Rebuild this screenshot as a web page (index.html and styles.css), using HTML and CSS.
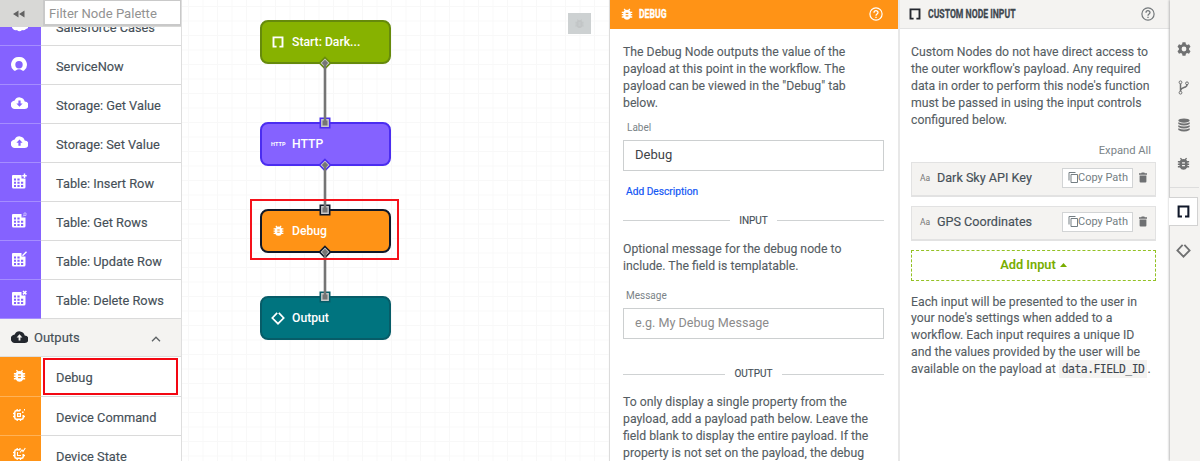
FILE: index.html
```html
<!DOCTYPE html>
<html lang="en">
<head>
<meta charset="utf-8">
<title>Workflow Editor</title>
<link rel="stylesheet" href="styles.css">
</head>
<body>
<svg class="defs" width="0" height="0" aria-hidden="true">
  <symbol id="bug" viewBox="0 0 24 24"><path fill="currentColor" d="M21 8h-3.2a6 6 0 0 0-1.8-2L17.800 4.200 16.200 2.600 13.800 5a7 7 0 0 0-3.600 0L7.800 2.600 6.200 4.200 8 6a6 6 0 0 0-1.800 2H3v2.300h2.600V12H3v2.300h2.600V16H3v2.300h3.200a6.500 6.500 0 0 0 11.600 0H21V16h-2.600v-1.700H21V12h-2.600v-1.700H21zM14.300 16.200H9.700v-2h4.600zm0-4.200H9.700v-2h4.600z"/></symbol>
  <symbol id="bracket" viewBox="0 0 12 12"><path fill="none" stroke="currentColor" stroke-width="1.9" d="M4.600 10.600H1.500V1.400H10.500V10.600H7.400"/></symbol>
  <symbol id="diamond" viewBox="0 0 14 14"><path fill="none" stroke="currentColor" stroke-width="1.700" d="M6.200 1.800 1.300 7 7 12.700 12.700 7 7.800 1.800"/></symbol>
  <symbol id="help" viewBox="0 0 14 14"><circle cx="7" cy="7" r="6.100" fill="none" stroke="currentColor" stroke-width="1.200"/><path fill="none" stroke="currentColor" stroke-width="1.300" d="M5 5.700C5 3 9 3 9 5.600 9 7 7 7 7 8.700M7 9.700V11"/></symbol>
  <symbol id="table" viewBox="0 0 16 16"><path fill="currentColor" fill-rule="evenodd" d="M2 2h8.500v3.500H14.500V14a1.500 1.500 0 0 1-1.500 1.500H2.500A1.500 1.500 0 0 1 1 14V3a1 1 0 0 1 1-1zM3 5.500v2h2v-2zm3.400 0v2h2.200v-2zM3 8.700v2h2v-2zm3.400 0v2h2.200v-2zm3.600 0v2h2.200v-2zM3 11.900v2h2v-2zm3.400 0v2h2.200v-2zm3.600 0v2h2.200v-2z"/></symbol>
  <symbol id="cloud" viewBox="0 0 17 12"><path fill="currentColor" d="M13.700 4.500A5.300 5.300 0 0 0 3.700 3.500 4.200 4.200 0 0 0 4.200 12h9.300a3.700 3.700 0 0 0 .2-7.500z"/></symbol>
  <symbol id="chip" viewBox="0 0 14 14"><path fill="none" stroke="currentColor" stroke-width="1.500" d="M8 2.800H4.300q-1.500 0-1.500 1.500v5.400q0 1.500 1.500 1.500h5.400q1.500 0 1.500-1.500V7"/><path stroke="currentColor" stroke-width="1.300" d="M5.200 1v2M8 1v2M5.200 11v2M8.500 11v2M1 5.500h2M1 8.500h2M11 8.500h2"/></symbol>
  <symbol id="copy" viewBox="0 0 10 11"><path fill="none" stroke="currentColor" d="M3 2.500h6.500v8H3zM1 8.500V.5h6.500"/></symbol>
  <symbol id="trash" viewBox="0 0 8 11"><path fill="currentColor" d="M2.700.5h2.600l.5.800H8v1.500H0V1.300h2.200zM.6 3.500h6.800V9.500q0 1-1 1H1.600q-1 0-1-1z"/></symbol>
</svg>
<div class="app">
  <aside class="palette">
    <div class="palette-head">
      <div class="collapse"><svg width="12" height="8" viewBox="0 0 12 8"><path fill="#626262" d="M5.500.5v7L0 4zM11.500.5v7L6 4z"/></svg></div>
      <div class="filter">Filter Node Palette</div>
    </div>
    <div class="palette-list">
      <div class="item"><div class="tile purple"><svg width="17" height="13" viewBox="0 0 17 13"><path fill="#fff" d="M1 6a4 4 0 0 1 6-4 4 4 0 0 1 7 2 3 3 0 0 1 1 6 4 4 0 0 1-4 1 3 3 0 0 1-5 0 4 4 0 0 1-5-5z"/></svg></div><span>Salesforce Cases</span></div>
      <div class="item"><div class="tile purple"><svg width="16" height="14" viewBox="0 0 16 14"><path fill="#fff" fill-rule="evenodd" d="M8 0a7.600 7.600 0 0 0-5.300 13.300q1 .9 2 .2a5.500 5.500 0 0 1 6.600 0q1 .7 2-.2A7.600 7.600 0 0 0 8 0zm0 4a3.700 3.700 0 1 1 0 7.400A3.700 3.700 0 0 1 8 4z"/></svg></div><span>ServiceNow</span></div>
      <div class="item"><div class="tile purple"><svg width="17" height="12" viewBox="0 0 17 12"><use href="#cloud"/><path fill="#8562ff" d="M7.400 3.500h2.200v3h2L8.500 9.800 5.400 6.500h2z"/></svg></div><span>Storage: Get Value</span></div>
      <div class="item"><div class="tile purple"><svg width="17" height="12" viewBox="0 0 17 12"><use href="#cloud"/><path fill="#8562ff" d="M7.400 9.800h2.200v-3h2L8.500 3.500 5.400 6.800h2z"/></svg></div><span>Storage: Set Value</span></div>
      <div class="item"><div class="tile purple"><svg width="16" height="16" viewBox="0 0 16 16"><use href="#table"/><path stroke="#fff" stroke-width="1.500" d="M13.500.5v4.400M11.300 2.700h4.400"/></svg></div><span>Table: Insert Row</span></div>
      <div class="item"><div class="tile purple"><svg width="16" height="16" viewBox="0 0 16 16"><use href="#table"/><path fill="none" stroke="#c5b6ff" d="M12 4.500l1-1.500V1h2v2.500h-2"/></svg></div><span>Table: Get Rows</span></div>
      <div class="item"><div class="tile purple"><svg width="16" height="16" viewBox="0 0 16 16"><use href="#table"/><path stroke="#fff" stroke-width="1.400" d="M11.500 4.800l4-4"/></svg></div><span>Table: Update Row</span></div>
      <div class="item"><div class="tile purple"><svg width="16" height="16" viewBox="0 0 16 16"><use href="#table"/><path stroke="#fff" stroke-width="1.500" d="M12 1l3.400 3.400M15.400 1L12 4.400"/></svg></div><span>Table: Delete Rows</span></div>
      <div class="group"><svg width="17" height="12" viewBox="0 0 17 12"><use href="#cloud"/><path fill="#f4f3f1" d="M7.600 9.500h1.800V6.600h2L8.500 3.200 5.600 6.600h2z"/></svg><span>Outputs</span><svg class="chev" width="10" height="6" viewBox="0 0 10 6"><path fill="none" stroke="#5d6265" stroke-width="1.300" d="M1 5.200l4-4 4 4"/></svg></div>
      <div class="item first"><div class="tile orange"><svg width="15" height="15"><use href="#bug"/></svg></div><span>Debug</span><div class="item-mark"></div></div>
      <div class="item"><div class="tile orange"><svg width="14" height="14" viewBox="0 0 14 14"><use href="#chip"/><path fill="none" stroke="#fff" stroke-width="1.200" d="M5.600 5.600h2.800v2.800H5.600z"/><path fill="#fff" d="M10 3.500h1.500v1.500H10zM12 1h1v1.500h-1z"/></svg></div><span>Device Command</span></div>
      <div class="item"><div class="tile orange"><svg width="14" height="14" viewBox="0 0 14 14"><use href="#chip"/><path fill="none" stroke="#fff" stroke-width="1.100" d="M5.500 5v3.500H9M8 5.500l2-2.500 1 1.500L13.300 1"/></svg></div><span>Device State</span></div>
    </div>
  </aside>

  <main class="canvas">
    <div class="node start"><svg width="12" height="12"><use href="#bracket"/></svg><span>Start: Dark...</span></div>
    <div class="node http"><small>HTTP</small><span>HTTP</span></div>
    <div class="node debug"><svg width="13" height="13"><use href="#bug"/></svg><span>Debug</span></div>
    <div class="node output"><svg width="14" height="14"><use href="#diamond"/></svg><span>Output</span></div>
    <svg class="wires" width="20" height="250" viewBox="0 0 20 250">
      <g stroke-width="1.600" fill="#c9c9c9">
        <path stroke="#668a0c" d="M10 7.500l5.500 5.500-5.500 5.500-5.500-5.500z"/>
        <path stroke="#4b2df0" d="M5.300 68.300h9.400v9.400H5.300zM10 109.500l5.500 5.500-5.500 5.500-5.500-5.500z"/>
        <path stroke="#101828" d="M5.300 155.300h9.400v9.400H5.300zM10 196.500l5.500 5.500-5.500 5.500-5.500-5.500z"/>
        <path stroke="#075c68" d="M5.300 242.300h9.400v9.400H5.300z"/>
      </g>
      <g fill="#757575"><path d="M10 9.800l3.200 3.200-3.200 3.200L6.800 13zM7.500 70.500h5v5h-5zM10 111.800l3.200 3.200-3.200 3.200-3.200-3.200zM7.500 157.500h5v5h-5zM10 198.800l3.200 3.200-3.200 3.200-3.200-3.200zM7.500 244.500h5v5h-5z"/></g>
      <path stroke="#757575" stroke-width="2.600" d="M10 13v60M10 115v45M10 202v45"/>
    </svg>
    <div class="selection"></div>
    <div class="float-tool"><svg width="11" height="11"><use href="#bug"/></svg></div>
  </main>

  <section class="panel inspector">
    <header><svg width="14" height="14"><use href="#bug"/></svg><h2>DEBUG</h2><svg class="help" width="14" height="14"><use href="#help"/></svg></header>
    <div class="body">
      <p>The Debug Node outputs the value of the<br>payload at this point in the workflow. The<br>payload can be viewed in the "Debug" tab<br>below.</p>
      <label>Label</label>
      <div class="field">Debug</div>
      <a class="link">Add Description</a>
      <div class="rule"><span>INPUT</span></div>
      <p>Optional message for the debug node to<br>include. The field is templatable.</p>
      <label class="message">Message</label>
      <div class="field hint">e.g. My Debug Message</div>
      <div class="rule second"><span>OUTPUT</span></div>
      <p>To only display a single property from the<br>payload, add a payload path below. Leave the<br>field blank to display the entire payload. If the<br>property is not set on the payload, the debug</p>
    </div>
  </section>

  <section class="panel inputs">
    <header><svg width="12" height="12"><use href="#bracket"/></svg><h2>CUSTOM NODE INPUT</h2><svg class="help" width="14" height="14"><use href="#help"/></svg></header>
    <div class="body">
      <p>Custom Nodes do not have direct access to<br>the outer workflow's payload. Any required<br>data in order to perform this node's function<br>must be passed in using the input controls<br>configured below.</p>
      <div class="expand">Expand All</div>
      <div class="input-row"><i>Aa</i><b>Dark Sky API Key</b><button><svg width="10" height="11"><use href="#copy"/></svg>Copy Path</button><svg width="8" height="11"><use href="#trash"/></svg></div>
      <div class="input-row"><i>Aa</i><b>GPS Coordinates</b><button><svg width="10" height="11"><use href="#copy"/></svg>Copy Path</button><svg width="8" height="11"><use href="#trash"/></svg></div>
      <div class="add">Add Input<svg width="7" height="4" viewBox="0 0 7 4"><path fill="#79ad00" d="M0 4l3.500-4L7 4z"/></svg></div>
      <p>Each input will be presented to the user in<br>your node's settings when added to a<br>workflow. Each input requires a unique ID<br>and the values provided by the user will be<br>available on the payload at <code>data.FIELD_ID</code>.</p>
    </div>
  </section>

  <nav class="rail">
    <div class="rail-item"><svg width="14" height="14" viewBox="0 0 14 14"><path fill="currentColor" fill-rule="evenodd" d="M5.500.3h3l.4 1.900 1.200.7 1.900-.6 1.500 2.500-1.400 1.400v1.600l1.400 1.400-1.500 2.500-1.900-.6-1.200.7-.4 1.900h-3l-.4-1.900-1.200-.7-1.900.6L.5 9.200l1.400-1.400V6.200L.5 4.800 2 2.300l1.900.6 1.200-.7zM7 4.600a2.400 2.400 0 1 0 0 4.800 2.400 2.400 0 0 0 0-4.800z"/></svg></div>
    <div class="rail-item"><svg width="11" height="15" viewBox="0 0 11 15"><g fill="none" stroke="currentColor"><circle cx="2.500" cy="2.300" r="1.400"/><circle cx="9" cy="3.300" r="1.400"/><circle cx="2.500" cy="12.700" r="1.400"/><path stroke-width="1.500" d="M2.500 3.700v7.600M9 4.700C9 8.500 3 6.500 2.600 10.500"/></g></svg></div>
    <div class="rail-item"><svg width="12" height="14" viewBox="0 0 12 14"><g fill="currentColor"><ellipse cx="6" cy="2.600" rx="5.700" ry="2.100"/><path d="M.3 4.300q5.700 2.600 11.400 0v1.600q-5.700 3-11.400 0zM.3 7.300q5.700 2.600 11.400 0v1.600q-5.700 3-11.400 0zM.3 10.300q5.700 2.600 11.400 0v1.600q-5.700 3.400-11.400 0z"/></g></svg></div>
    <div class="rail-item"><svg width="15" height="15"><use href="#bug"/></svg></div>
    <div class="rail-item active"><svg width="13" height="13"><use href="#bracket"/></svg></div>
    <div class="rail-item last"><svg width="15" height="15"><use href="#diamond"/></svg></div>
  </nav>
</div>
</body>
</html>
```
FILE: styles.css
```css
* { box-sizing: border-box; }
body { margin: 0; font-family: Roboto, "Liberation Sans", sans-serif; color: #465058; background: #fff; }
svg { display: block; flex: none; }
.defs { position: absolute; }
.app { display: grid; grid-template-columns: 182px 427px 289px 272px 30px; height: 461px; overflow: hidden; }

.palette { display: flex; flex-direction: column; height: 461px; overflow: hidden; border-right: 1px solid #dedede; }
.palette-head { display: flex; height: 27px; flex: none; background: #d8d8d6; z-index: 1; }
.collapse { width: 42px; display: flex; align-items: center; justify-content: center; padding-right: 4px; }
.filter { flex: 1; margin: 0 0 1px 1px; padding-left: 4px; background: #fff; border: 1px solid #c9c9c9; border-width: 1px 1px 2px 2px; font-size: 13.100px; line-height: 25px; color: #929292; }
.palette-list { margin-top: -20px; }
.item { position: relative; display: flex; height: 39px; border-bottom: 1px solid #dadada; font-size: 12.800px; line-height: 41px; white-space: nowrap; -webkit-text-stroke: 0.150px; }
.tile { width: 41px; margin-right: 15px; height: 39px; flex: none; display: flex; align-items: center; justify-content: center; padding: 0 3px 2px 0; color: #fff; }
.purple { background: #8562ff; border-bottom: 1px solid #a58dff; }
.orange { background: #ff9316; border-bottom: 1px solid #ffb257; }
.group { display: flex; align-items: center; height: 38px; padding: 0 20px 1px 11px; background: #f4f3f1; border-bottom: 1px solid #dedede; font-size: 13px; color: #23272e; }
.group span { flex: 1; padding-left: 6px; color: #465058; -webkit-text-stroke: 0.150px; }
.chev { margin-top: 3px; }
.first { height: 40px; }
.first .tile { height: 40px; }
.item-mark { position: absolute; left: 43px; top: 1px; width: 135px; height: 37px; border: 2px solid #f30712; }

.canvas { position: relative; background-color: #fff; background-image: linear-gradient(90deg, #f8f8f8 1px, transparent 1px), linear-gradient(#f8f8f8 1px, transparent 1px); background-size: 14.500px 14.500px; background-position: 6px 6px; }
.node { position: absolute; left: 78px; width: 131px; height: 44px; border: 2px solid; border-radius: 8px; color: #fff; display: flex; align-items: center; font-size: 12.200px; font-weight: 500; padding: 0 0 1px 10px; }
.node span { position: absolute; left: 30px; top: 12px; line-height: 16px; }
.node svg { margin-left: 0; }
.node small { font-size: 5.500px; font-weight: 700; letter-spacing: 0.100px; margin-left: -1px; }
.start { top: 20px; background: #87b200; border-color: #668a0c; }
.http { top: 122px; background: #8562ff; border-color: #4b2df0; }
.debug { top: 209px; background: #ff9316; border-color: #101828; }
.output { top: 296px; background: #00747f; border-color: #075c68; }
.node.output svg { margin-left: -1px; }
.wires { position: absolute; left: 133px; top: 50px; overflow: visible; }
.selection { position: absolute; left: 68px; top: 199px; width: 149px; height: 61px; border: 2px solid #f5121b; }
.float-tool { position: absolute; left: 386px; top: 13px; width: 23px; height: 21px; background: #cdd1d2; color: #c2c5c6; display: flex; align-items: center; justify-content: center; }

.panel { overflow: hidden; border-left: 1px solid #dcdcdc; background: #fff; }
.panel header { display: flex; align-items: center; height: 29px; padding: 0 15px 1px 10px; }
.panel h2 { margin: 0 0 0 5px; width: 0; white-space: nowrap; font-size: 12px; font-weight: 700; transform: scaleX(0.720); transform-origin: 0 50%; -webkit-text-stroke: 0.300px; }
.help { margin-left: auto; }
.inspector header { background: #ff9316; color: #fff; }
.inspector .body { padding: 15px 14px 0 13px; }
.panel p { margin: 0; font-size: 12.250px; line-height: 16.900px; color: #555d63; white-space: nowrap; -webkit-text-stroke: 0.100px; }
label { display: block; margin: 9px 0 6px 4px; font-size: 10px; line-height: 13px; color: #7a8387; }
label.message { margin-top: 15px; margin-left: 3px; }
.field { height: 31px; border: 1px solid #cccfd0; padding-left: 11px; font-size: 13px; line-height: 28px; color: #3e4347; }
.hint { color: #8b8b8b; font-size: 12.600px; }
.link { display: block; margin: 14px 0 0 3px; font-size: 10.200px; line-height: 14px; color: #1457f5; -webkit-text-stroke: 0.200px; }
.rule { display: flex; align-items: center; gap: 9px; margin: 15px 0 13px; font-size: 10px; line-height: 14px; color: #465058; -webkit-text-stroke: 0.150px; }
.rule.second { margin-top: 28px; }
.rule::before, .rule::after { content: ""; flex: 1; height: 1px; background: #cfd2d3; }

.inputs { border-left: 2px solid #e8e8e8; }
.inputs header { background: #f4f3f1; border-bottom: 1px solid #e2e2e2; padding-left: 9px; color: #23272e; }
.inputs h2 { margin-left: 7px; color: #3e474f; }
.inputs .help { color: #73787b; }
.inputs .body { padding: 15px 14px 0 11px; }
.expand { margin: 14px 5px 3px; text-align: right; font-size: 11.200px; line-height: 16px; color: #7b8488; }
.input-row { display: flex; align-items: center; height: 35px; margin-bottom: 9px; padding: 0 8px 2px; background: #f4f3f1; border: 1px solid #e2e2e2; border-width: 1px 1px 2px; color: #6e7072; }
.input-row i { width: 17px; font: 8.500px Roboto, sans-serif; color: #777; }
.input-row b { flex: 1; font-size: 12.600px; font-weight: 400; color: #465058; white-space: nowrap; -webkit-text-stroke: 0.150px; }
.input-row button { display: flex; align-items: center; height: 20px; width: 71px; margin-right: 6px; padding: 0 0 0 5px; background: #fff; border: 1px solid #d2d4d5; font: 11px Roboto, sans-serif; color: #747e83; white-space: nowrap; }
.add { display: flex; align-items: center; justify-content: center; gap: 4px; height: 31px; border: 1px dashed #93c124; color: #79ad00; font-size: 12.800px; font-weight: 600; margin-bottom: 13px; padding-bottom: 1px; }
code { font: 11.400px "DejaVu Sans Mono", monospace; letter-spacing: -0.500px; background: #f4f3f1; padding: 2px 3px; color: #3e474f; }

.rail { position: relative; background: #f4f3f1; box-shadow: -1px 0 2px #bbb; padding-top: 30px; color: #707172; }
.rail-item { height: 38px; display: flex; align-items: center; justify-content: center; padding-right: 3px; }
.rail-item.active { height: 29px; margin: 15px 2px 0 -1px; background: #fff; border: 1px solid #d2d2d2; border-left: 0; color: #10182a; padding-right: 0; position: relative; }
.rail-item.active::before { content: ""; position: absolute; left: 1px; right: -2px; top: -11px; height: 1px; background: #ddd; }
.rail-item.last { height: 48px; }
```
